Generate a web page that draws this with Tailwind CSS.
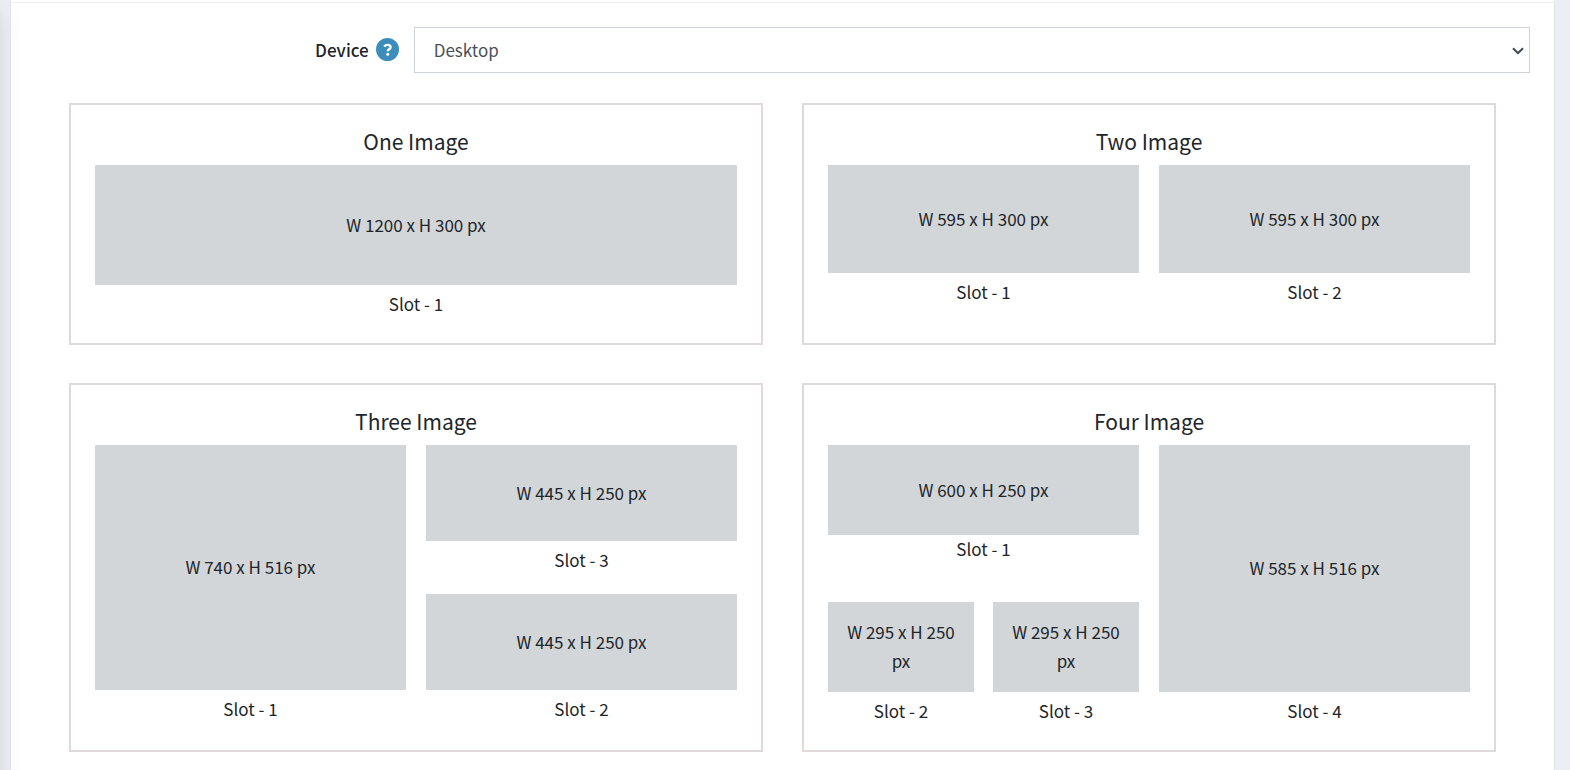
<!DOCTYPE html>
<html lang="en">
<head>
<meta charset="utf-8">
<meta name="viewport" content="width=device-width, initial-scale=1">
<title>Banner layouts</title>
<script src="https://cdn.jsdelivr.net/npm/@tailwindcss/browser@4"></script>
</head>
<body class="min-h-screen overflow-x-hidden bg-[#ebeff4] font-['Noto_Sans_CJK_SC','Source_Sans_Pro',sans-serif] text-[17px] leading-[29px] text-[#212529]">
<!-- Shadow cast by the collapsed sidebar -->
<div class="pointer-events-none fixed top-0 right-full z-10 h-[120vh] w-64 shadow-[0_14px_28px_rgba(0,0,0,0.08),0_10px_10px_rgba(0,0,0,0.06)]" aria-hidden="true"></div>
<main class="mr-4 ml-[11px] min-h-screen bg-white pt-0.5 pb-[18px] shadow-[0_0_1px_rgba(0,0,0,0.08),0_1px_3px_rgba(0,0,0,0.06)]">
  <form class="flex items-center border-t border-[#f0f0f0] px-3.5 pt-6">
    <div class="flex w-1/4 items-center justify-end gap-[7px] pr-[5px] pb-0.5">
      <label for="device" class="font-medium">Device</label>
      <button type="button" aria-label="Help" class="size-[23px]">
        <svg viewBox="0 0 23 23" class="size-full" fill="none">
          <circle cx="11.5" cy="11.5" r="11.5" fill="#3c8dbc"/>
          <path d="M8.2 8.6C9 7.3 10 6.8 11.5 6.8c1.9 0 3.1 1 3.1 2.4 0 2.2-2.8 2-2.8 4" stroke="#fff" stroke-width="2.3"/>
          <circle cx="11.7" cy="16.2" r="1.5" fill="#fff"/>
        </svg>
      </button>
    </div>
    <div class="relative w-3/4 px-2.5">
      <select id="device" class="block h-[46px] w-full appearance-none border border-[#ced4da] bg-white px-[19px] pb-0.5 text-[#495057]">
        <option>Desktop</option>
        <option>Mobile</option>
      </select>
      <svg viewBox="0 0 12 8" class="pointer-events-none absolute top-5 right-4 h-2 w-3" fill="none" stroke="#40474d" stroke-width="2"><path d="M1 1.2l5 5 5-5"/></svg>
    </div>
  </form>
  <div class="grid grid-cols-2 gap-x-[39px] gap-y-[38px] px-[58px] pt-[30px] text-center">
    <section class="border-2 border-[#dfd9d9] p-6">
      <h2 class="mb-3 text-[21px] leading-6">One Image</h2>
      <figure>
        <div class="flex h-[120px] items-center justify-center bg-[#d2d6d9] pb-0.5">W 1200 x H 300 px</div>
        <figcaption class="pt-1 pb-px">Slot - 1</figcaption>
      </figure>
    </section>
    <section class="border-2 border-[#dfd9d9] p-6">
      <h2 class="mb-3 text-[21px] leading-6">Two Image</h2>
      <div class="grid grid-cols-2 gap-5">
        <figure>
          <div class="flex h-[108px] items-center justify-center bg-[#d2d6d9] pb-0.5">W 595 x H 300 px</div>
          <figcaption class="pt-1 pb-px">Slot - 1</figcaption>
        </figure>
        <figure>
          <div class="flex h-[108px] items-center justify-center bg-[#d2d6d9] pb-0.5">W 595 x H 300 px</div>
          <figcaption class="pt-1 pb-px">Slot - 2</figcaption>
        </figure>
      </div>
    </section>
    <section class="border-2 border-[#dfd9d9] p-6">
      <h2 class="mb-3 text-[21px] leading-6">Three Image</h2>
      <div class="grid grid-cols-2 gap-5">
        <figure class="flex flex-col">
          <div class="flex grow items-center justify-center bg-[#d2d6d9] pb-0.5">W 740 x H 516 px</div>
          <figcaption class="pt-1 pb-px">Slot - 1</figcaption>
        </figure>
        <div class="grid gap-[19px]">
          <figure>
            <div class="flex h-24 items-center justify-center bg-[#d2d6d9] pb-0.5">W 445 x H 250 px</div>
            <figcaption class="pt-1 pb-px">Slot - 3</figcaption>
          </figure>
          <figure>
            <div class="flex h-24 items-center justify-center bg-[#d2d6d9] pb-0.5">W 445 x H 250 px</div>
            <figcaption class="pt-1 pb-px">Slot - 2</figcaption>
          </figure>
        </div>
      </div>
    </section>
    <section class="border-2 border-[#dfd9d9] p-6">
      <h2 class="mb-3 text-[21px] leading-6">Four Image</h2>
      <div class="grid grid-cols-2 gap-5">
        <div class="grid gap-[37px]">
          <figure>
            <div class="flex h-[90px] items-center justify-center bg-[#d2d6d9] pb-0.5">W 600 x H 250 px</div>
            <figcaption class="pb-px leading-7">Slot - 1</figcaption>
          </figure>
          <div class="grid grid-cols-2 gap-[19px] pt-px">
            <figure>
              <div class="flex h-[90px] items-center justify-center bg-[#d2d6d9] px-3 pb-0.5">W 295 x H 250 px</div>
              <figcaption class="pt-1 pb-px">Slot - 2</figcaption>
            </figure>
            <figure>
              <div class="flex h-[90px] items-center justify-center bg-[#d2d6d9] px-3 pb-0.5">W 295 x H 250 px</div>
              <figcaption class="pt-1 pb-px">Slot - 3</figcaption>
            </figure>
          </div>
        </div>
        <figure class="flex flex-col">
          <div class="flex grow items-center justify-center bg-[#d2d6d9] pb-0.5">W 585 x H 516 px</div>
          <figcaption class="pt-1 pb-px">Slot - 4</figcaption>
        </figure>
      </div>
    </section>
  </div>
</main>
</body>
</html>
